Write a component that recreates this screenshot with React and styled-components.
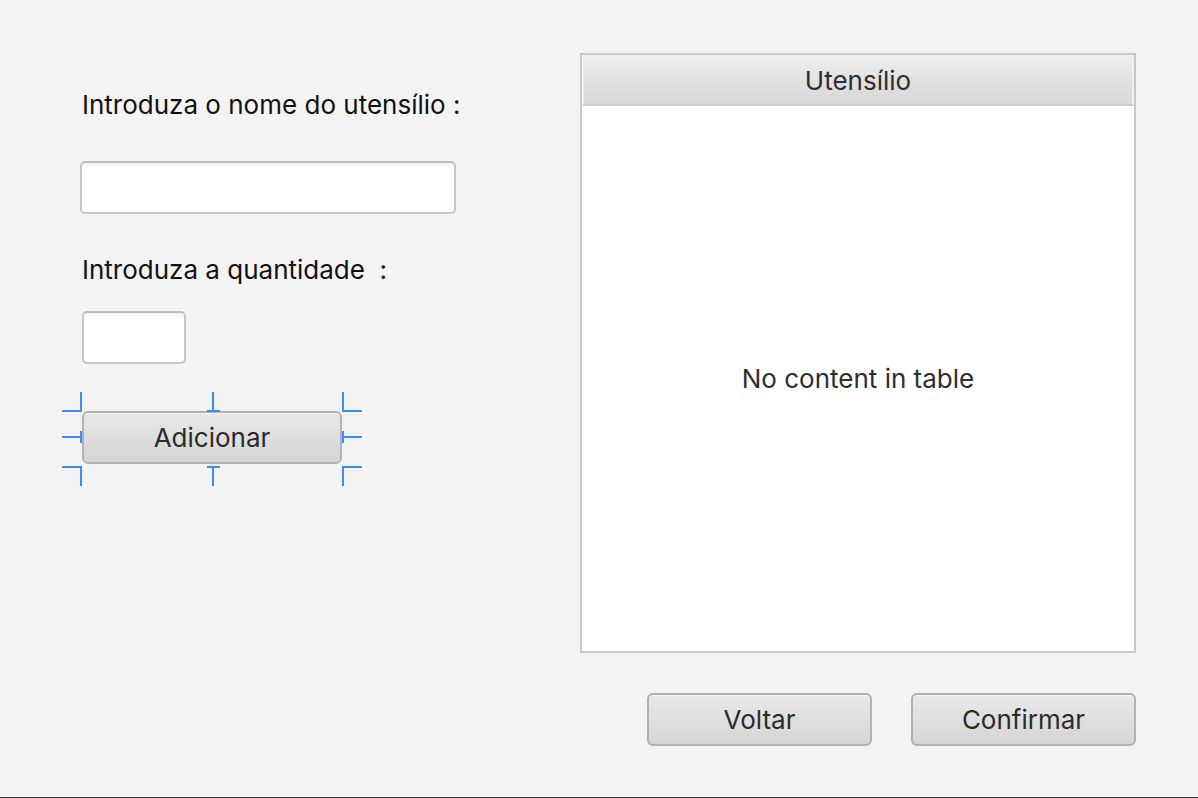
import React from 'react';
import styled, { createGlobalStyle } from 'styled-components';

const GlobalStyle = createGlobalStyle`
  html, body {
    margin: 0;
    padding: 0;
    background: #f3f3f3;
  }
  body {
    font-family: Inter, "Noto Sans", "Liberation Sans", sans-serif;
  }
`;

const Window = styled.div`
  width: 1198px;
  height: 797px;
  border-bottom: 1px solid #3a3a3a;
  background: #f3f3f3;
  display: flex;
  overflow: hidden;
`;

const LeftColumn = styled.div`
  width: 580px;
  padding: 91px 0 0 82px;
  box-sizing: border-box;
  display: flex;
  flex-direction: column;
  align-items: flex-start;
`;

const RightColumn = styled.div`
  width: 556px;
  padding-top: 53px;
  display: flex;
  flex-direction: column;
`;

const Label = styled.div`
  font-size: 26px;
  line-height: 28px;
  color: #111;
  white-space: pre;
  margin-top: ${(p) => p.$top || 0}px;
`;

const Field = styled.div`
  width: ${(p) => p.$width}px;
  height: 53px;
  box-sizing: border-box;
  margin-top: ${(p) => p.$top || 0}px;
  margin-left: ${(p) => p.$shift || 0}px;
  border: 2px solid #c6c6c6;
  border-top-color: #bdbdbd;
  border-radius: 5px;
  background: linear-gradient(#f2f2f2 0px, #ffffff 6px, #ffffff 100%);
`;

const Selected = styled.div`
  position: relative;
  margin-top: ${(p) => p.$top || 0}px;
`;

const Handles = styled.svg`
  position: absolute;
  left: -20px;
  top: -19px;
  pointer-events: none;
`;

const Button = styled.button`
  width: ${(p) => p.$width}px;
  height: 53px;
  box-sizing: border-box;
  border: 2px solid #b2b2b2;
  border-radius: 6px;
  background: linear-gradient(#e9e9e9, #d5d5d5);
  box-shadow: inset 0 1px 0 #f6f6f6;
  font-family: inherit;
  font-size: 26px;
  color: #2b2b2b;
  padding: 0;
  display: flex;
  align-items: center;
  justify-content: center;
`;

const Table = styled.div`
  height: 600px;
  box-sizing: border-box;
  border: 2px solid #c8c8c8;
  background: #fff;
  display: flex;
  flex-direction: column;
`;

const TableHeader = styled.div`
  height: 51px;
  box-sizing: border-box;
  background: linear-gradient(#ededed, #d7d7d7);
  border: 2px solid #f0f0f0;
  border-bottom: 2px solid #cbcbcb;
  display: flex;
  align-items: center;
  justify-content: center;
  font-size: 26px;
  color: #2e2e2e;
`;

const TableBody = styled.div`
  flex: 1;
  display: flex;
  align-items: center;
  justify-content: center;
  font-size: 26px;
  color: #2e2e2e;
`;

const ButtonRow = styled.div`
  display: flex;
  justify-content: flex-end;
  gap: 39px;
  margin-top: 40px;
`;

function SelectionHandles() {
  const c = '#3d8bf7';
  const lines = [
    'M19 0V19H0', 'M151 0V19M145 19H158', 'M281 0V19H300',
    'M0 45H19M19 39V51', 'M281 45H300M281 39V51',
    'M0 75H19V94', 'M145 75H158M151 75V94', 'M300 75H281V94',
  ];
  return (
    <Handles width="300" height="94" viewBox="0 0 300 94">
      {lines.map((d) => (
        <path key={d} d={d} stroke={c} strokeWidth="2" fill="none" />
      ))}
    </Handles>
  );
}

export default function App() {
  return (
    <>
      <GlobalStyle />
      <Window>
        <LeftColumn>
          <Label>Introduza o nome do utensílio :</Label>
          <Field $width={376} $top={42} $shift={-2} />
          <Label $top={42}>Introduza a quantidade  :</Label>
          <Field $width={104} $top={27} />
          <Selected $top={47}>
            <SelectionHandles />
            <Button $width={260}>Adicionar</Button>
          </Selected>
        </LeftColumn>
        <RightColumn>
          <Table>
            <TableHeader>Utensílio</TableHeader>
            <TableBody>No content in table</TableBody>
          </Table>
          <ButtonRow>
            <Button $width={225}>Voltar</Button>
            <Button $width={225}>Confirmar</Button>
          </ButtonRow>
        </RightColumn>
      </Window>
    </>
  );
}
